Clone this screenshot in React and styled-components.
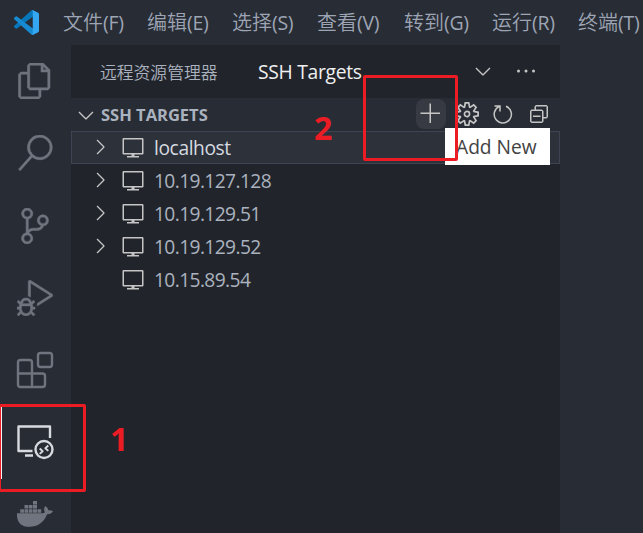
import React from 'react';
import styled, { createGlobalStyle } from 'styled-components';
import {
  VscFiles, VscSearch, VscSourceControl, VscDebugAlt,
  VscChevronDown, VscChevronRight, VscAdd,
  VscSettingsGear, VscCollapseAll, VscVm, VscEllipsis,
} from 'react-icons/vsc';

const Global = createGlobalStyle`
  * { box-sizing: border-box; }
  body { margin: 0; overflow: hidden; background: #282c34; }
  svg { display: block; flex: none; }
`;

const Window = styled.div`
  position: relative;
  display: grid;
  grid-template: 45px 488px / 71px 489px 83px;
  width: 643px;
  height: 533px;
  overflow: hidden;
  background: #282c34;
  color: #abb2bf;
  font-family: "Open Sans", "Noto Sans CJK SC", sans-serif;
  white-space: nowrap;
`;

const TitleBar = styled.header`
  grid-column: 1 / -1;
  display: flex;
  align-items: center;
  padding-left: 14px;
  color: #9da5b4;
`;

const Menu = styled.nav`
  display: grid;
  grid-template-columns: 84px 85px 85px 87px 88px 86px 70px;
  margin-left: 24px;
  font-size: 20px;
  line-height: 43px;
  height: 45px;
`;

const MenuItem = styled.span`
  font-family: "Noto Sans CJK SC", sans-serif;
  font-weight: 350;
`;

const Mnemonic = styled.span`
  font-family: "Open Sans", sans-serif;
  font-size: 19.5px;
  letter-spacing: -0.3px;
  font-weight: 400;
`;

const ActivityBar = styled.aside`
  display: flex;
  flex-direction: column;
  overflow: hidden;
`;

const Activity = styled.div`
  flex: none;
  height: 72.25px;
  display: flex;
  align-items: center;
  justify-content: center;
  border-left: 2px solid ${p => (p.$active ? '#f5f5f5' : 'transparent')};
  padding-right: 3px;
  color: ${p => (p.$active ? '#d7dae0' : '#6f747e')};
  font-size: 36px;

  svg[stroke='currentColor'] { stroke-width: 0.35px; }
`;

const SideBar = styled.main`
  background: #21252b;
`;

const PaneTitle = styled.div`
  height: 53px;
  display: flex;
  align-items: center;
  padding: 0 22px 0 29px;
  font-size: 24px;
`;

const ViewName = styled.span`
  width: 158px;
  font-size: 16.8px;
  font-weight: 350;
  font-family: "Noto Sans CJK SC", sans-serif;
`;

const Selected = styled.span`
  flex: 1;
  font-size: 19.3px;
  color: #f0f0f0;
  letter-spacing: -0.3px;
`;

const PaneActions = styled.div`
  display: flex;
  gap: 19px;
  margin-top: -2px;
  color: #c5c5c5;
`;

const SectionHeader = styled.div`
  height: 33px;
  display: flex;
  align-items: center;
  padding: 0 9px 0 3px;
  background: #282c34;
  font-size: 24px;
  color: #c5c5c5;
`;

const SectionName = styled.span`
  flex: 1;
  margin-left: 3px;
  color: #abb2bf;
  font-size: 16.5px;
  font-weight: 700;
`;

const SectionActions = styled.div`
  display: flex;
  align-items: center;
  gap: 12px;
  margin-top: -2px;
`;

const AddButton = styled.span`
  width: 30px;
  height: 30px;
  display: grid;
  place-items: center;
  margin-right: -3px;
  border-radius: 8px;
  background: #373a42;
`;

const Row = styled.div`
  height: 33px;
  display: flex;
  align-items: center;
  padding-left: 16px;
  border: 1px solid ${p => (p.$selected ? '#3e4452' : 'transparent')};
  background: ${p => (p.$selected ? '#2c313a' : 'transparent')};
  color: ${p => (p.$selected ? '#d7dae0' : '#abb2bf')};
  font-size: 19.2px;
`;

const Twistie = styled.span`
  width: 33px;
  margin-top: -2px;
  color: #c5c5c5;
  font-size: 24px;
`;

const HostIcon = styled.span`
  margin-top: -1px;
  color: #c5c5c5;
  font-size: 24px;
`;

const Host = styled.span`
  margin: 0 0 0 9px;
  letter-spacing: ${p => p.$spacing}px;
`;

const Tooltip = styled.div`
  position: absolute;
  left: 445px;
  top: 128px;
  width: 105px;
  height: 37px;
  padding-left: 11px;
  background: #fff;
  color: #424242;
  font-size: 19.2px;
  line-height: 37px;
`;

const Frame = styled.div`
  position: absolute;
  left: ${p => p.$x}px;
  top: ${p => p.$y}px;
  width: ${p => p.$w}px;
  height: ${p => p.$h}px;
  border: 3px solid #ec1c24;
  border-radius: 2px;
`;

const StepNumber = styled.div`
  position: absolute;
  left: ${p => p.$x}px;
  top: ${p => p.$y}px;
  color: #ec1c24;
  font-size: 32px;
  line-height: 40px;
  font-weight: 700;
`;

const Logo = () => (
  <svg width="25" height="25" viewBox="0 0 100 100">
    <path fill="#0877b9" d="M96 11 76 1a6 6 0 0 0-7 1L1 63a4 4 0 0 0 0 6l6 5a4 4 0 0 0 5 0L94 13z" />
    <path fill="#168bd2" d="M96 89 76 99a6 6 0 0 1-7-1L1 37a4 4 0 0 1 0-6l6-5a4 4 0 0 1 5 0l82 62z" />
    <path fill="#35a7f2" d="M76 99a6 6 0 0 1-7-1c2 2 6 1 6-3V5c0-4-4-5-6-3a6 6 0 0 1 7-1l20 10a6 6 0 0 1 4 6v66a6 6 0 0 1-4 6z" />
  </svg>
);

const Refresh = () => (
  <svg width="24" height="24" viewBox="0 0 24 24" fill="none" stroke="currentColor" strokeWidth="1.5">
    <path d="M3.5 4H9v5.5M8.6 4.3A8.6 8.6 0 1 0 15 4.3" />
  </svg>
);

const Outline = styled.svg`
  width: 36px;
  height: 36px;
  overflow: visible;
  fill: none;
  stroke: currentColor;
  stroke-width: 2.4px;
  stroke-linejoin: round;
`;

const Extensions = () => (
  <Outline viewBox="0 0 36 36">
    <rect x="21" y="1" width="14" height="14" rx="2.5" />
    <path d="M3.500 8H12.500a2.500 2.500 0 0 1 2.500 2.500V21.500h10.500a2.500 2.500 0 0 1 2.500 2.500V32.500a2.500 2.500 0 0 1-2.500 2.500H3.500a2.500 2.500 0 0 1-2.500-2.500V10.500a2.500 2.500 0 0 1 2.500-2.500zM1 21.500h14V35" />
  </Outline>
);

const Remote = () => (
  <Outline viewBox="0 0 36 36">
    <path d="M15.500 27H1.500V2.500h31.500V14M8 31.500h8" />
    <circle cx="27" cy="25.500" r="8.500" />
    <path strokeWidth="1.900" d="m22.700 24.500 3 2.700-3 2.700M31.300 21.500l-3 2.700 3 2.700" />
  </Outline>
);

const Whale = () => (
  <svg width="36" height="36" viewBox="0 0 36 36" fill="currentColor">
    <path d="M16 4h4v3.500h-4zM7.500 8h3.700v3.500H7.500zM11.800 8h3.700v3.500h-3.700zM16 8h4v3.500h-4zM3.200 12.200h3.800v3.500H3.200zM7.500 12.200h3.700v3.500H7.500zM11.800 12.200h3.700v3.500h-3.700zM16 12.200h4v3.500h-4zM20.500 12.200h3.700v3.500h-3.700z" />
    <path d="M0 16.300h24.500c1.500 0 2.700-.4 3.500-1-1.400-2-1.200-4.400.3-6.300 1.800 1.200 2.800 2.600 2.900 4.300 1.800-.4 3.400 0 4.800.9-1.200 2.200-3.100 3.100-5.900 3-3.300 8.300-9.200 12.500-17.600 12.500C4 29.700-.5 25.300 0 16.300z" />
  </svg>
);

const menus = [['文件', 'F'], ['编辑', 'E'], ['选择', 'S'], ['查看', 'V'], ['转到', 'G'], ['运行', 'R'], ['终端', 'T']];
const activities = [VscFiles, VscSearch, VscSourceControl, VscDebugAlt, Extensions, Remote, Whale];
const hosts = ['localhost', '10.19.127.128', '10.19.129.51', '10.19.129.52', '10.15.89.54'];

export default function App() {
  return (
    <Window>
      <Global />
      <TitleBar>
        <Logo />
        <Menu>
          {menus.map(([name, key]) => (
            <MenuItem key={key}>{name}<Mnemonic>({key})</Mnemonic></MenuItem>
          ))}
        </Menu>
      </TitleBar>
      <ActivityBar>
        {activities.map((Icon, i) => (
          <Activity key={i} $active={Icon === Remote}><Icon /></Activity>
        ))}
      </ActivityBar>
      <SideBar>
        <PaneTitle>
          <ViewName>远程资源管理器</ViewName>
          <Selected>SSH Targets</Selected>
          <PaneActions><VscChevronDown /><VscEllipsis /></PaneActions>
        </PaneTitle>
        <SectionHeader>
          <VscChevronDown />
          <SectionName>SSH TARGETS</SectionName>
          <SectionActions>
            <AddButton><VscAdd /></AddButton>
            <VscSettingsGear />
            <Refresh />
            <VscCollapseAll />
          </SectionActions>
        </SectionHeader>
        {hosts.map((host, i) => (
          <Row key={host} $selected={i === 0}>
            <Twistie>{i < 4 && <VscChevronRight />}</Twistie>
            <HostIcon><VscVm /></HostIcon>
            <Host $spacing={i === 0 ? -0.4 : -0.6}>{host}</Host>
          </Row>
        ))}
      </SideBar>
      <Tooltip>Add New</Tooltip>
      <Frame $x={-2} $y={404} $w={88} $h={88} />
      <Frame $x={363} $y={75} $w={95} $h={86} />
      <StepNumber $x={110} $y={419}>1</StepNumber>
      <StepNumber $x={314} $y={108}>2</StepNumber>
    </Window>
  );
}
